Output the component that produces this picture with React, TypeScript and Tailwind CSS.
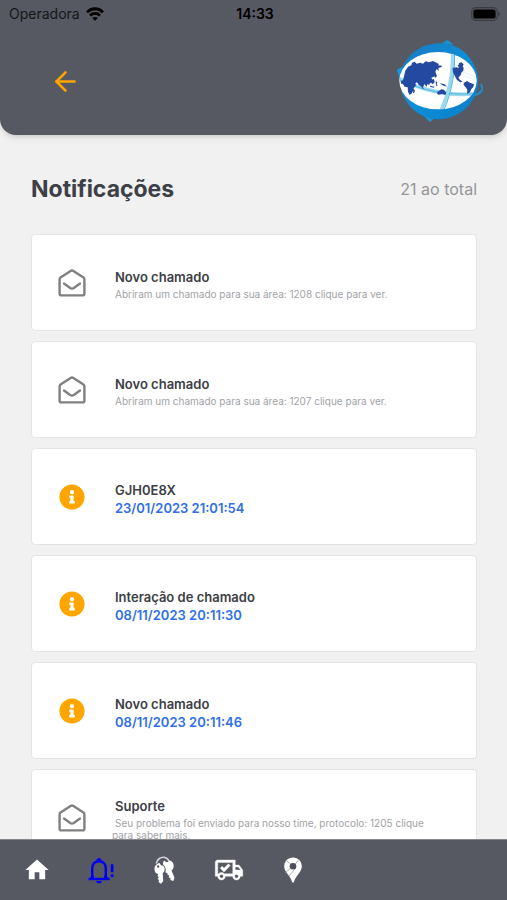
import { ArrowLeft } from 'lucide-react';
import { FaInfoCircle } from 'react-icons/fa';

type Notification = {
    id: number;
    type: 'mail' | 'info';
    title: string;
    message?: string;
    date?: string;
};

const notifications: Notification[] = [
    { id: 1, type: 'mail', title: 'Novo chamado', message: 'Abriram um chamado para sua área: 1208 clique para ver.' },
    { id: 2, type: 'mail', title: 'Novo chamado', message: 'Abriram um chamado para sua área: 1207 clique para ver.' },
    { id: 3, type: 'info', title: 'GJH0E8X', date: '23/01/2023 21:01:54' },
    { id: 4, type: 'info', title: 'Interação de chamado', date: '08/11/2023 20:11:30' },
    { id: 5, type: 'info', title: 'Novo chamado', date: '08/11/2023 20:11:46' },
    {
        id: 6,
        type: 'mail',
        title: 'Suporte',
        message: 'Seu problema foi enviado para nosso time, protocolo: 1205 clique para saber mais.',
    },
];

function WifiIcon() {
    return (
        <svg className="w-[18px] h-[14px]" viewBox="0 0 18 14" fill="none" stroke="#000" strokeWidth="2.8">
            <path d="M1 5.2C5.6.6 12.4.6 17 5.2" />
            <path d="M4 8.6c2.9-2.8 7.1-2.8 10 0" />
            <path d="M9 13.8 6.2 11c1.5-1.4 4.1-1.4 5.6 0z" fill="#000" stroke="none" />
        </svg>
    );
}

function BatteryIcon() {
    return (
        <svg className="w-[30px] h-[14px]" viewBox="0 0 30 14">
            <rect x="0.7" y="0.7" width="25.6" height="12.6" rx="4" fill="none" stroke="#3a3c42" strokeWidth="1.2" />
            <rect x="2.4" y="2.4" width="22.2" height="9.2" rx="2.2" fill="#000" />
            <path d="M27.5 4.8c1.7.5 1.7 3.9 0 4.4z" fill="#33353a" />
        </svg>
    );
}

function Logo() {
    return (
        <svg className="w-[86px] h-[84px]" viewBox="21 27 258 252" role="img" aria-label="Logo">
            <defs>
                <linearGradient id="globe" x1="0" y1="0" x2="1" y2="1">
                    <stop offset="0" stopColor="#1b77bd" />
                    <stop offset="0.5" stopColor="#0d8fd8" />
                    <stop offset="1" stopColor="#0a7cc9" />
                </linearGradient>
                <clipPath id="eye">
                    <ellipse cx="144" cy="152" rx="116" ry="86" />
                </clipPath>
            </defs>
            {/* Outer ring with its tips */}
            <path d="M155 40 172 30l20 14zM102 258l18 18 18-14zM40 108l-20 12 10 30z" fill="#1596d2" />
            <path d="M272 162c8 10 6 24-8 30l-14 4" fill="none" stroke="#1a8fc9" strokeWidth="6" />
            <path
                d="M30 150C30 88 82 42 146 40c66-2 114 50 118 110 2 62-50 116-118 118C82 268 30 214 30 150z"
                fill="url(#globe)"
            />
            <ellipse cx="144" cy="152" rx="116" ry="86" fill="#fff" />
            <g clipPath="url(#eye)">
                {/* Orbit lines */}
                <path d="M20 142c70 38 160 60 250 48" fill="none" stroke="#9cd9ef" strokeWidth="11" />
                <path d="M30 150c70 34 150 48 240 40" fill="none" stroke="#50b9df" strokeWidth="3" />
                <path d="M187 60c4 60-6 122-34 182" fill="none" stroke="#9cd9ef" strokeWidth="11" />
                <path d="M193 60c4 60-6 122-32 182" fill="none" stroke="#50b9df" strokeWidth="3" />
                <path d="M210 122c20 8 40 16 60 32M208 132l58 22" fill="none" stroke="#d2e8f1" strokeWidth="2" />
                {/* Continents */}
                <g fill="#2449a0">
                    <path d="m46 122 8-12 10-4 2-8 8-3 6 6 11-3 8 3 8-7 10 3 12-4 18 9-3 4 13 1-4 5-8 2 2 9-7-6-4 8 3 8-7 7-8 3 4 8-7 9-8 1-4 10-5-9-5 9 2 8-7-9-8-6-5-7-8 5-9-7-6-4-4 5 6 3-7 2-5-6-6 6-8 1-2-8 7-3z" />
                    <path d="m40 151 12-4 12 5 9 2 5 11-4 6-3 3 1 7-5 5-3 6-6 2-4-9-1-13-9-2-6-9z" />
                    <path d="m70 180 5-1-2 9-4 1zM106 150l8 1 6 12-5 1-6-6zM123 150l9-3 2 10-7 6-5-6zM137 154l5 2-2 8 4 2-6 2zM150 160l14 3 7 7-14-4zM120 167l14 3-3 3-11-3zM133 137l5-5 3 6-6 6z" />
                    <path d="m143 185 11-7 8 1 7 9-3 7-9-3-12 2-4-4z" />
                    <path d="m188 114 11-2 8 2-4-8 7-5 6 4 5 9-1 8-5 5-4 10-6 5 3 6 9 7-6 2-10-7-5-9-7-14-1-9zM206 100l8-3 7 6-3 6-7-2z" />
                    <path d="m221 159 10-6 9 5 12 5-2 8-6 6-4 10-9 4 1-12-5-7-6-7z" />
                </g>
            </g>
        </svg>
    );
}

function OpenMailIcon() {
    return (
        <svg
            className="w-7 h-7"
            viewBox="0 0 28 28"
            fill="none"
            stroke="#808080"
            strokeWidth="2.4"
            strokeLinecap="round"
            strokeLinejoin="round"
        >
            <path d="M1.600 10.200c0-.8.300-1.400.9-1.800L12.600 1.900c.9-.6 1.900-.6 2.800 0l10.100 6.500c.6.4.9 1 .9 1.800v14.600c0 1-.6 1.600-1.600 1.600H3.200c-1 0-1.600-.6-1.600-1.600z" />
            <path d="m6 14.600 6.200 4.400c1.200.8 2.400.8 3.600 0l6.200-4.400" />
        </svg>
    );
}

function HomeIcon() {
    return (
        <svg className="w-7 h-7" viewBox="0 0 24 24" fill="currentColor">
            <path d="M10 20v-6h4v6h5v-8h3L12 3 2 12h3v8z" />
        </svg>
    );
}

function BellIcon() {
    return (
        <svg className="w-7 h-7" viewBox="0 0 28 28">
            <g fill="none" stroke="currentColor" strokeWidth="2.4">
                <path d="M5.200 23V12.500C5.200 8 8.100 5.200 12 5.200s6.800 2.800 6.800 7.300V23" />
                <path d="M1.500 23h21" />
            </g>
            <path d="M9.500 4.500a2.500 2.500 0 0 1 5 0zM9.200 25h5.600a2.800 2.300 0 0 1-5.600 0zM2.200 22.500 5 19.600h2v3zM21.800 22.500 19 19.600h-2v3z" fill="currentColor" />
            <path d="M23.800 8.200h2.700v8h-2.700zM23.800 18.200h2.700v2.700h-2.700z" fill="currentColor" />
        </svg>
    );
}

function KeysIcon() {
    return (
        <svg className="w-7 h-7" viewBox="0 0 28 28" fill="currentColor">
            <path d="M5.300 7.500C6 3.500 9.500.900 13 1.300c2.300.3 4 1.700 5 3.700" fill="none" stroke="#d5d6d9" strokeWidth="1.600" />
            <path
                fillRule="evenodd"
                d="M8.600 6.900c.4 1.500 1.500 2.500 3.200 2.700 1.500 1.200 2.200 3 1.700 5-.3 1.200-.9 2-1.800 2.600l.5 8-2.200 2.500-2.500-1.800.5-1.800-1.400-1.400 1.200-1.400-1.200-1.400.6-1.800C4.900 17.400 3.600 15.600 3.500 13.400 3.300 10 5.500 7.400 8.600 6.900zM7 9.300a1.200 1.200 0 1 0 .2 2.400A1.200 1.200 0 0 0 7 9.300z"
            />
            <path
                fillRule="evenodd"
                d="M13.300 4.600c1 1.200 2.200 1.700 3.700 1.500l1.300-1.900c2.600.6 4.500 2.900 4.400 5.700 0 1.900-.8 3.500-2.200 4.600l3 7.300-1.100 3.100-3-.8.200-1.900-1.900-.7.600-1.900-1.800-.9-.1-1.800c-.8-.1-1.400-.3-2-.7.900-2.700.2-5.500-2-7.200-1-2 .3-4 .9-4.400z"
            />
        </svg>
    );
}

function TruckIcon() {
    return (
        <svg className="w-[30px] h-[30px]" viewBox="0 0 24 24" fill="currentColor" stroke="currentColor" strokeWidth="0.3">
            <path d="M18 18.500C18.830 18.500 19.500 17.830 19.500 17S18.830 15.500 18 15.500 16.500 16.170 16.500 17 17.170 18.500 18 18.500M19.500 9.500H17V12H21.460L19.500 9.500M6 18.500C6.830 18.500 7.500 17.830 7.500 17S6.830 15.500 6 15.500 4.500 16.170 4.500 17 5.170 18.500 6 18.500M20 8L23 12V17H21C21 18.660 19.660 20 18 20S15 18.660 15 17H9C9 18.660 7.660 20 6 20S3 18.660 3 17H1V6C1 4.890 1.890 4 3 4H17V8H20M3 6V15H3.760C4.310 14.390 5.110 14 6 14S7.690 14.390 8.240 15H15V6H3M5 10.500L6.500 9L8 10.500L11.500 7L13 8.500L8 13.500L5 10.500Z" />
        </svg>
    );
}

function MapPinIcon() {
    return (
        <svg className="w-[18px] h-[26px]" viewBox="0 0 18 26">
            <path d="M9 .5c5 0 8.800 3.800 8.800 8.700 0 3-1.300 5.200-3.300 7.700-2.200 2.800-3.600 4.500-4.300 7.400-.2.900-.5 1.300-1.200 1.300s-1-.4-1.200-1.300c-.7-2.900-2.100-4.600-4.300-7.400C1.500 14.400.2 12.200.2 9.200.200 4.300 4 .500 9 .500z" fill="currentColor" />
            <path d="M6.700 7.200 2.400 3.500M11.400 7l3.200-4.300M11.500 11.200 5 19M6.500 11.200 1 16" stroke="#8f9197" strokeWidth="0.7" />
            <circle cx="9" cy="9.200" r="3.300" fill="#4d5058" />
        </svg>
    );
}

const navItems = [
    { label: 'Início', icon: <HomeIcon />, active: false },
    { label: 'Notificações', icon: <BellIcon />, active: true },
    { label: 'Chaves', icon: <KeysIcon />, active: false },
    { label: 'Entregas', icon: <TruckIcon />, active: false },
    { label: 'Mapa', icon: <MapPinIcon />, active: false },
];

function NotificationCard({ item }: { item: Notification }) {
    return (
        <li className="flex items-center h-[97px] shrink-0 bg-white border border-[#e4e4e5] rounded">
            <div className="w-20 shrink-0 flex justify-center">
                {item.type === 'mail' ? <OpenMailIcon /> : <FaInfoCircle className="w-[26px] h-[26px] text-[#ffa500]" />}
            </div>
            <div className="flex-1 pr-9 indent-[3px]">
                <h2 className="text-[13px] leading-[22px] font-semibold text-[#3d4046]">{item.title}</h2>
                {item.message && <p className="text-[10px] leading-3 text-[#a0a2a6]">{item.message}</p>}
                {item.date && <p className="text-[13px] leading-[14px] font-semibold text-[#2f6fe8]">{item.date}</p>}
            </div>
        </li>
    );
}

export default function App() {
    return (
        <div className="h-screen flex flex-col bg-[#f1f1f1] font-[Inter,sans-serif]">
            <header className="shrink-0 bg-[#565961] rounded-b-2xl shadow-md pb-3">
                {/* Status bar */}
                <div className="grid grid-cols-3 items-center h-7 pl-[9px] pr-[6px] text-sm text-[#15161a]">
                    <div className="flex items-center gap-1.5">
                        <span>Operadora</span>
                        <WifiIcon />
                    </div>
                    <span className="text-center font-semibold text-black">14:33</span>
                    <div className="flex justify-end">
                        <BatteryIcon />
                    </div>
                </div>

                <div className="flex items-center justify-between pt-[11px] pl-[50px] pr-6">
                    <button aria-label="Voltar" className="text-[#ffa500]">
                        <ArrowLeft size={31} strokeWidth={2} />
                    </button>
                    <Logo />
                </div>
            </header>

            <main className="flex-1 min-h-0 overflow-y-auto [scrollbar-width:none] pl-[31px] pr-[30px] pt-9">
                <div className="flex items-center justify-between h-9">
                    <h1 className="text-[23px] font-bold text-[#3d4046]">Notificações</h1>
                    <span className="text-base text-[#949699]">21 ao total</span>
                </div>
                <ul className="flex flex-col gap-[10px] pt-[27px] pb-3">
                    {notifications.map((item) => (
                        <NotificationCard key={item.id} item={item} />
                    ))}
                </ul>
            </main>

            {/* Bottom navigation */}
            <nav className="shrink-0 flex h-[61px] px-[5px] bg-[#565961] border-t border-[#85878c]">
                {navItems.map((item) => (
                    <button
                        key={item.label}
                        aria-label={item.label}
                        className={`w-16 flex items-center justify-center ${item.active ? 'text-[#0000f5]' : 'text-white'}`}
                    >
                        {item.icon}
                    </button>
                ))}
            </nav>
        </div>
    );
}
